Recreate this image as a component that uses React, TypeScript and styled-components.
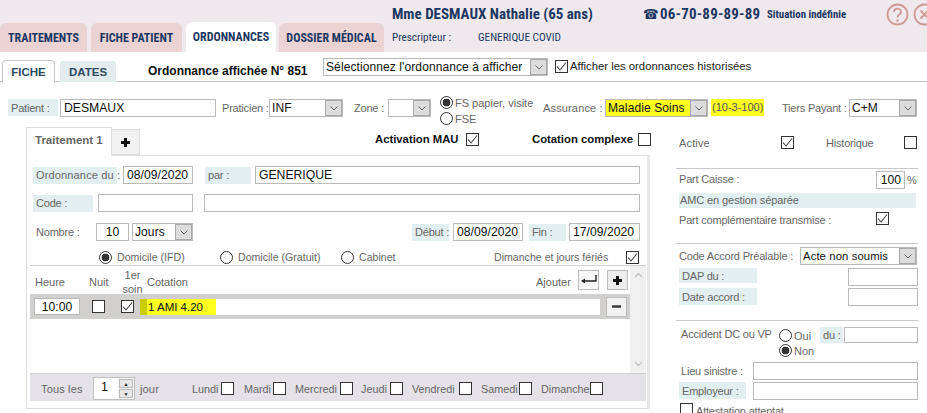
import React from 'react';
import styled, { createGlobalStyle, css } from 'styled-components';

type Box = { $ml?: number; $w?: number; $h?: number; $mt?: number; $pt?: number };

const boxed = css<Box>`
  ${(p) => p.$ml !== undefined && `margin-left: ${p.$ml}px;`}
  ${(p) => p.$mt !== undefined && `margin-top: ${p.$mt}px;`}
  ${(p) => p.$pt !== undefined && `padding-top: ${p.$pt}px;`}
  ${(p) => p.$w !== undefined && `width: ${p.$w}px;`}
  ${(p) => p.$h !== undefined && `height: ${p.$h}px;`}
  flex: none;
`;

const Check = ({ on, ml, mt }: { on?: boolean; ml?: number; mt?: number }) => (
  <CheckBox $ml={ml} $mt={mt}>
    {on && (
      <svg width="11" height="11" viewBox="0 0 11 11">
        <path d="M1 5.5 L4 9 L10 1.5" fill="none" stroke="#444" strokeWidth="1.1" />
      </svg>
    )}
  </CheckBox>
);

const Select = ({ w, ml, value, mark, small }: { w: number; ml?: number; value: string; mark?: boolean; small?: boolean }) => (
  <SelectBox $w={w} $ml={ml} $mark={mark}>
    <SelectValue $small={small}>{value}</SelectValue>
    <SelectArrow>
      <svg width="8" height="5" viewBox="0 0 8 5">
        <path d="M0.5 0.5 L4 4 L7.5 0.5" fill="none" stroke="#666" strokeWidth="1" />
      </svg>
    </SelectArrow>
  </SelectBox>
);

const Days: [string, number, number][] = [
  ['Lundi', 12, 29],
  ['Mardi', 10, 29],
  ['Mercredi', 9, 45],
  ['Jeudi', 8, 29],
  ['Vendredi', 9, 47],
  ['Samedi', 9, 38],
  ['Dimanche', 9, 49],
];

const App = () => {
  return (
    <>
      <GlobalStyle />
      <Page>
        <Header>
          <TabRow>
            <HeadTab $w={87}>TRAITEMENTS</HeadTab>
            <HeadTab $w={91} $ml={4}>FICHE PATIENT</HeadTab>
            <HeadTab $w={90} $ml={4} $active>ORDONNANCES</HeadTab>
            <HeadTab $w={105} $ml={3}>DOSSIER MÉDICAL</HeadTab>
          </TabRow>
          <HeadInfo>
            <HeadLine>
              <PatientName>Mme DESMAUX Nathalie (65 ans)</PatientName>
              <PhoneIcon>☎</PhoneIcon>
              <PhoneNumber>06-70-89-89-89</PhoneNumber>
              <Situation>Situation indéfinie</Situation>
              <RoundIcon $ml={41}>
                <svg width="23" height="23" viewBox="0 0 23 23">
                  <circle cx="11.5" cy="11.5" r="10" fill="none" stroke="#cf9a94" strokeWidth="1.8" />
                  <path d="M8 9 C8 4.5 15 4.5 15 9 C15 11.5 11.5 11.5 11.5 14.5" fill="none" stroke="#cf9a94" strokeWidth="1.9" />
                  <circle cx="11.5" cy="17.5" r="1.2" fill="#cf9a94" />
                </svg>
              </RoundIcon>
              <RoundIcon $ml={4}>
                <svg width="23" height="23" viewBox="0 0 23 23">
                  <circle cx="11.5" cy="11.5" r="10" fill="none" stroke="#cf9a94" strokeWidth="1.8" />
                  <path d="M7.5 7.5 L15.5 15.5 M15.5 7.5 L7.5 15.5" fill="none" stroke="#cf9a94" strokeWidth="1.9" />
                </svg>
              </RoundIcon>
            </HeadLine>
            <SubLine>
              <SubText $w={86}>Prescripteur :</SubText>
              <SubText>GENERIQUE COVID</SubText>
            </SubLine>
          </HeadInfo>
        </Header>

        <SubBar>
          <SubTab $w={53} $ml={2} $active>FICHE</SubTab>
          <SubTab $w={56} $ml={5}>DATES</SubTab>
          <SubTitle>Ordonnance affichée N° 851</SubTitle>
          <Select w={225} value="Sélectionnez l'ordonnance à afficher" />
          <Check on ml={7} mt={2} />
          <BarLabel>Afficher les ordonnances historisées</BarLabel>
        </SubBar>

        <PatientRow>
          <Label $w={50} $ml={8} $tint>Patient :</Label>
          <Input $w={156} $ml={2} defaultValue="DESMAUX" readOnly />
          <Label $w={47} $ml={6}>Praticien :</Label>
          <Select w={74} value="INF" />
          <Label $w={32} $ml={11}>Zone :</Label>
          <Select w={43} ml={2} value="" />
          <RadioStack>
            <RadioLine><Radio $on /><RadioText>FS papier, visite</RadioText></RadioLine>
            <RadioLine><Radio /><RadioText>FSE</RadioText></RadioLine>
          </RadioStack>
          <Label $w={60} $ml={11} $wide>Assurance :</Label>
          <Select w={103} ml={2} value="Maladie Soins" mark />
          <Rate>(10-3-100)</Rate>
          <Label $w={64} $ml={18}>Tiers Payant :</Label>
          <Select w={68} ml={3} value="C+M" />
        </PatientRow>

        <Main>
          <LeftColumn>
            <TabStrip>
              <TreatTab>Traitement 1</TreatTab>
              <PlusTab>
                <PlusGlyph />
              </PlusTab>
              <StripLabel $ml={235} $w={91}>Activation MAU</StripLabel>
              <Check on />
              <StripLabel $ml={53} $w={106}>Cotation complexe</StripLabel>
              <Check />
            </TabStrip>
            <Panel>
              <FormRow $mt={10}>
                <Label $w={84} $ml={3} $tint $wide>Ordonnance du :</Label>
                <Input $w={70} $ml={6} defaultValue="08/09/2020" readOnly />
                <Label $w={46} $ml={12} $tint>par :</Label>
                <Input $w={385} $ml={4} defaultValue="GENERIQUE" readOnly />
              </FormRow>
              <FormRow $mt={10}>
                <Label $w={60} $ml={3} $tint>Code :</Label>
                <Input $w={95} $ml={5} readOnly />
                <Input $w={436} $ml={11} readOnly />
              </FormRow>
              <FormRow $mt={11}>
                <Label $w={60} $ml={6}>Nombre :</Label>
                <Input $w={33} $center defaultValue="10" readOnly />
                <Select w={61} ml={3} value="Jours" />
                <Label $w={37} $ml={219} $tint>Début :</Label>
                <Input $w={70} $ml={4} defaultValue="08/09/2020" readOnly />
                <Label $w={37} $ml={6} $tint>Fin :</Label>
                <Input $w={71} $ml={3} defaultValue="17/09/2020" readOnly />
              </FormRow>
              <PlaceRow>
                <Radio $on $ml={69} />
                <PlaceText $w={108}>Domicile (IFD)</PlaceText>
                <Radio />
                <PlaceText $w={108}>Domicile (Gratuit)</PlaceText>
                <Radio />
                <PlaceText $w={135}>Cabinet</PlaceText>
                <PlaceText $w={137}>Dimanche et jours fériés</PlaceText>
                <Check on />
              </PlaceRow>
              <TableArea>
                <TableMain>
                  <TableHead>
                    <Head $w={54} $ml={5}>Heure</Head>
                    <Head $w={29}>Nuit</Head>
                    <Head $w={29} $center>1er<br />soin</Head>
                    <Head $w={389}>Cotation</Head>
                    <Head $w={42}>Ajouter</Head>
                    <SmallButton>
                      <svg width="16" height="10" viewBox="0 0 16 10">
                        <path d="M15 0 V6 H3" fill="none" stroke="#222" strokeWidth="1.4" />
                        <path d="M0 6 L4 3.5 V8.5 Z" fill="#222" />
                      </svg>
                    </SmallButton>
                    <SmallButton $ml={8} $dark><PlusGlyph /></SmallButton>
                  </TableHead>
                  <TableRow>
                    <Input $w={46} $ml={4} $h={17} $center defaultValue="10:00" readOnly />
                    <Check ml={12} />
                    <Check on ml={16} />
                    <CotationInput>
                      <CotationMark>1 AMI 4.20</CotationMark>
                    </CotationInput>
                    <SmallButton $ml={6} $light>
                      <MinusGlyph />
                    </SmallButton>
                  </TableRow>
                </TableMain>
                <Scrollbar>
                  <svg width="9" height="6" viewBox="0 0 9 6"><path d="M1 5 L4.5 1.5 L8 5" fill="none" stroke="#c5c5c5" strokeWidth="1.4" /></svg>
                  <svg width="9" height="6" viewBox="0 0 9 6"><path d="M1 1 L4.5 4.5 L8 1" fill="none" stroke="#c5c5c5" strokeWidth="1.4" /></svg>
                </Scrollbar>
              </TableArea>
              <RepeatBar>
                <Label $w={52} $ml={11} $wide>Tous les</Label>
                <Spinner>
                  <SpinnerValue>1</SpinnerValue>
                  <SpinnerButtons>
                    <SpinButton>▲</SpinButton>
                    <SpinButton>▼</SpinButton>
                  </SpinnerButtons>
                </Spinner>
                <Label $w={40} $ml={5} $wide>jour</Label>
                {Days.map(([day, gap, width]) => (
                  <DayItem key={day} $ml={gap}>
                    <DayName $w={width}>{day}</DayName>
                    <Check />
                  </DayItem>
                ))}
              </RepeatBar>
            </Panel>
          </LeftColumn>

          <RightColumn>
            <SideRow $h={42} $pt={9} $line>
              <Label $w={102} $ml={3} $h={13} $wide>Active</Label>
              <Check on />
              <Label $w={78} $ml={32} $h={13}>Historique</Label>
              <Check />
            </SideRow>
            <SideRow $h={24} $pt={2}>
              <Label $w={197} $ml={3} $h={16}>Part Caisse :</Label>
              <Input $w={29} $right defaultValue="100" readOnly />
              <Label $w={12} $ml={2}>%</Label>
            </SideRow>
            <Band>AMC en gestion séparée</Band>
            <SideRow $h={36} $pt={4} $line>
              <Label $w={197} $ml={3} $h={15}>Part complémentaire transmise :</Label>
              <Check on />
            </SideRow>
            <SideRow $h={22} $pt={3}>
              <Label $w={121} $ml={3}>Code Accord Préalable :</Label>
              <Select w={117} value="Acte non soumis" small />
            </SideRow>
            <SideRow $h={21} $pt={2}>
              <Label $w={78} $ml={3} $h={15} $tint>DAP du :</Label>
              <Input $w={70} $ml={91} readOnly />
            </SideRow>
            <SideRow $h={34} $pt={1} $line>
              <Label $w={78} $ml={3} $tint>Date accord :</Label>
              <Input $w={70} $ml={91} readOnly />
            </SideRow>
            <AccidentRow>
              <Label $w={98} $ml={5} $h={13}>Accident DC ou VP</Label>
              <RadioStack $tight>
                <RadioLine><Radio /><RadioText>Oui</RadioText></RadioLine>
                <RadioLine><Radio $on /><RadioText>Non</RadioText></RadioLine>
              </RadioStack>
              <Label $w={23} $h={16} $tint>du :</Label>
              <Input $w={74} $ml={1} $h={16} readOnly />
            </AccidentRow>
            <SideRow $h={20} $pt={1}>
              <Label $w={72} $ml={5}>Lieu sinistre :</Label>
              <Input $w={165} readOnly />
            </SideRow>
            <SideRow $h={22} $pt={1}>
              <Label $w={67} $ml={3} $tint>Employeur :</Label>
              <Input $w={165} $ml={7} readOnly />
            </SideRow>
            <SideRow $h={14}>
              <Check ml={4} />
              <Label $ml={3} $h={15}>Attestation attentat</Label>
            </SideRow>
          </RightColumn>
        </Main>
      </Page>
    </>
  );
};

const PlusGlyph = () => (
  <svg width="9" height="9" viewBox="0 0 9 9">
    <path d="M4.5 0 V9 M0 4.5 H9" stroke="#111" strokeWidth="3" />
  </svg>
);

const MinusGlyph = () => (
  <svg width="9" height="3" viewBox="0 0 9 3">
    <path d="M0 1.5 H9" stroke="#333" strokeWidth="2.4" />
  </svg>
);

const GlobalStyle = createGlobalStyle`
  html, body { margin: 0; padding: 0; background: #fff; overflow: hidden; }
  * { box-sizing: border-box; }
`;

const Page = styled.div`
  width: 927px;
  height: 413px;
  overflow: hidden;
  background: #fff;
  font-family: "Liberation Sans", Arial, sans-serif;
  font-size: 11px;
  color: #666;
`;

const narrow = css`
  font-family: "Roboto", sans-serif;
  font-stretch: 75%;
`;

const Header = styled.div`
  display: flex;
  height: 52px;
  background: #efe9ed;
`;

const TabRow = styled.div`
  display: flex;
  flex: none;
  align-items: flex-end;
  width: 392px;
`;

const HeadTab = styled.div<Box & { $active?: boolean }>`
  ${boxed}
  ${narrow}
  display: flex;
  align-items: center;
  justify-content: center;
  height: ${(p) => (p.$active ? 30 : 29)}px;
  border-radius: 6px 6px 0 0;
  background: ${(p) => (p.$active ? '#fff' : '#ebd3d3')};
  color: #1d3763;
  font-size: 12px;
  font-weight: 700;
  white-space: nowrap;
`;

const HeadInfo = styled.div`
  display: flex;
  flex-direction: column;
  flex: 1;
  min-width: 0;
  color: #1d3763;
  ${narrow}
`;

const HeadLine = styled.div`
  display: flex;
  align-items: center;
  height: 28px;
`;

const PatientName = styled.div`
  flex: none;
  width: 251px;
  font-size: 15px;
  font-weight: 700;
  white-space: nowrap;
`;

const PhoneIcon = styled.div`
  flex: none;
  width: 17px;
  font-family: "DejaVu Sans", sans-serif;
  font-size: 14px;
`;

const PhoneNumber = styled.div`
  flex: none;
  width: 107px;
  font-size: 15px;
  font-weight: 700;
  letter-spacing: 0.2px;
  white-space: nowrap;
`;

const Situation = styled.div`
  flex: none;
  width: 78px;
  font-size: 10.8px;
  font-weight: 700;
  white-space: nowrap;
`;

const RoundIcon = styled.div<Box>`
  ${boxed}
  display: flex;
  height: 23px;
`;

const SubLine = styled.div`
  display: flex;
  align-items: center;
  height: 22px;
  padding-bottom: 3px;
`;

const SubText = styled.div<Box>`
  ${boxed}
  font-size: 11.2px;
  white-space: nowrap;
`;

const SubBar = styled.div`
  display: flex;
  align-items: flex-start;
  height: 30px;
  padding-top: 6px;
  border-bottom: 1px solid #c4c4c4;
`;

const SubTab = styled.div<Box & { $active?: boolean }>`
  ${boxed}
  display: flex;
  align-items: center;
  justify-content: center;
  height: ${(p) => (p.$active ? 23 : 21)}px;
  margin-top: ${(p) => (p.$active ? 2 : 3)}px;
  border-radius: 4px 4px 0 0;
  border: ${(p) => (p.$active ? '1px solid #c8c8c8' : '1px solid #e2ebee')};
  border-bottom: ${(p) => (p.$active ? '1px solid #fff' : 'none')};
  background: ${(p) => (p.$active ? '#fff' : '#e2ebee')};
  color: #2e4a63;
  font-size: 11.5px;
  font-weight: 700;
`;

const SubTitle = styled.div`
  flex: none;
  width: 175px;
  margin: 6px 0 0 32px;
  color: #111;
  font-size: 12px;
  font-weight: 700;
  white-space: nowrap;
`;

const BarLabel = styled.div`
  flex: none;
  margin: 2px 0 0 2px;
  color: #222;
  font-size: 11.3px;
  white-space: nowrap;
`;

const PatientRow = styled.div`
  display: flex;
  align-items: flex-start;
  height: 32px;
  margin-top: 13px;
  padding-top: 4px;
`;

const Label = styled.div<Box & { $tint?: boolean; $wide?: boolean }>`
  ${boxed}
  display: flex;
  align-items: center;
  height: ${(p) => (p.$h !== undefined ? p.$h : 17)}px;
  padding-left: ${(p) => (p.$tint ? 3 : 0)}px;
  background: ${(p) => (p.$tint ? '#e3eef0' : 'transparent')};
  color: #666;
  font-size: 11px;
  letter-spacing: ${(p) => (p.$wide ? '0.15px' : '-0.2px')};
  white-space: nowrap;
`;

const Input = styled.input<Box & { $center?: boolean; $right?: boolean }>`
  ${boxed}
  height: ${(p) => (p.$h !== undefined ? p.$h : 18)}px;
  padding: 0 3px;
  border: 1px solid #b9b9b9;
  outline: none;
  background: #fff;
  color: #111;
  font-family: "Liberation Sans", Arial, sans-serif;
  font-size: 12.2px;
  text-align: ${(p) => (p.$center ? 'center' : p.$right ? 'right' : 'left')};
`;

const SelectBox = styled.div<Box & { $mark?: boolean }>`
  ${boxed}
  display: flex;
  height: 18px;
  border: 1px solid #b9b9b9;
  background: ${(p) => (p.$mark ? '#ffff20' : '#fff')};
`;

const SelectValue = styled.div<{ $small?: boolean }>`
  flex: 1;
  overflow: hidden;
  padding-left: 2px;
  color: #111;
  font-size: ${(p) => (p.$small ? 11.3 : 12)}px;
  line-height: 16px;
  letter-spacing: 0.1px;
  white-space: nowrap;
`;

const SelectArrow = styled.div`
  display: flex;
  flex: none;
  align-items: center;
  justify-content: center;
  width: 17px;
  border: 1px solid #a8a8a8;
  background: #dcdcdc;
`;

const Rate = styled.div`
  flex: none;
  width: 53px;
  margin-left: 3px;
  padding: 0 1px;
  background: #ffff20;
  color: #555;
  font-size: 11px;
  line-height: 17px;
  white-space: nowrap;
`;

const CheckBox = styled.div<Box>`
  ${boxed}
  display: flex;
  align-items: center;
  justify-content: center;
  width: 13px;
  height: 13px;
  border: 1px solid #333;
  background: #fff;
`;

const Radio = styled.div<Box & { $on?: boolean }>`
  ${boxed}
  width: 13px;
  height: 13px;
  border: 1px solid #333;
  border-radius: 50%;
  background: ${(p) => (p.$on ? 'radial-gradient(circle, #333 0 3.6px, #fff 4.2px)' : '#fff')};
`;

const RadioStack = styled.div<{ $tight?: boolean }>`
  display: flex;
  flex: none;
  flex-direction: column;
  gap: ${(p) => (p.$tight ? 2 : 3)}px;
  width: ${(p) => (p.$tight ? 41 : 92)}px;
  margin: ${(p) => (p.$tight ? '2px 0 0 0' : '-3px 0 0 9px')};
`;

const RadioLine = styled.div`
  display: flex;
  align-items: center;
  height: 13px;
`;

const RadioText = styled.span`
  margin-left: 2px;
  font-size: 11px;
  white-space: nowrap;
`;

const Main = styled.div`
  display: flex;
  align-items: flex-start;
  padding-left: 26px;
`;

const LeftColumn = styled.div`
  flex: none;
  width: 624px;
`;

const TabStrip = styled.div`
  display: flex;
  align-items: center;
  height: 28px;
`;

const TreatTab = styled.div`
  display: flex;
  align-items: center;
  align-self: stretch;
  flex: none;
  width: 86px;
  margin-bottom: -1px;
  padding: 0 0 3px 8px;
  border: 1px solid #ddd;
  border-bottom: 1px solid #fff;
  background: #fff;
  color: #666;
  font-size: 11.5px;
  font-weight: 700;
`;

const PlusTab = styled.div`
  display: flex;
  align-self: flex-end;
  align-items: center;
  justify-content: center;
  flex: none;
  width: 28px;
  height: 26px;
  border: 1px solid #ddd;
  border-left: none;
  background: #f1f1f1;
`;

const StripLabel = styled.div<Box>`
  ${boxed}
  margin-top: -4px;
  color: #111;
  font-size: 11.3px;
  font-weight: 700;
  white-space: nowrap;
  & + div { margin-top: -4px; }
`;

const Panel = styled.div`
  display: flex;
  flex-direction: column;
  height: 254px;
  padding: 0 1px 6px 3px;
  border: 1px solid #ddd;
  border-right: 3px solid #e8e8e8;
`;

const FormRow = styled.div<Box>`
  ${boxed}
  display: flex;
  align-items: center;
  height: 18px;
`;

const PlaceRow = styled.div`
  display: flex;
  align-items: center;
  height: 14px;
  margin-top: 9px;
`;

const PlaceText = styled.div<Box>`
  ${boxed}
  padding-left: 5px;
  font-size: 10.6px;
  white-space: nowrap;
`;

const TableArea = styled.div`
  display: flex;
  height: 109px;
  margin-top: 1px;
  border-top: 1px solid #d0d0d0;
  border-bottom: 1px solid #d0d0d0;
`;

const TableMain = styled.div`
  display: flex;
  flex-direction: column;
  flex: none;
  width: 600px;
`;

const TableHead = styled.div`
  display: flex;
  align-items: center;
  height: 28px;
`;

const Head = styled.div<Box & { $center?: boolean }>`
  ${boxed}
  margin-top: 4px;
  font-size: 11px;
  line-height: 14px;
  text-align: ${(p) => (p.$center ? 'center' : 'left')};
`;

const SmallButton = styled.div<Box & { $dark?: boolean; $light?: boolean }>`
  ${boxed}
  display: flex;
  align-items: center;
  justify-content: center;
  width: 21px;
  height: 20px;
  border: 1px solid #bbb;
  background: ${(p) => (p.$dark ? '#ececec' : p.$light ? '#f1f1f1' : '#f8f8f8')};
`;

const TableRow = styled.div`
  display: flex;
  align-items: center;
  height: 25px;
  background: #d2cfcf;
`;

const CotationInput = styled.div`
  flex: none;
  width: 460px;
  height: 16px;
  margin-left: 6px;
  background: #fff;
`;

const CotationMark = styled.div`
  width: 76px;
  height: 16px;
  padding-left: 8px;
  background: linear-gradient(90deg, #cccc00 0 7px, #ffff20 7px);
  color: #111;
  font-size: 11.5px;
  line-height: 16px;
  white-space: nowrap;
`;

const Scrollbar = styled.div`
  display: flex;
  flex: 1;
  flex-direction: column;
  align-items: center;
  justify-content: space-between;
  padding: 6px 0;
  background: #f0f0f0;
`;

const RepeatBar = styled.div`
  display: flex;
  align-items: center;
  height: 27px;
  padding-top: 2px;
  background: #e4e2e6;
`;

const Spinner = styled.div`
  display: flex;
  flex: none;
  width: 42px;
  height: 23px;
  border: 1px solid #c0c0c0;
  background: #fff;
`;

const SpinnerValue = styled.div`
  width: 24px;
  padding: 2px 0 0 7px;
  color: #111;
  font-size: 12.5px;
`;

const SpinnerButtons = styled.div`
  display: flex;
  flex: 1;
  flex-direction: column;
  gap: 1px;
  padding: 1px;
  background: #f4f4f4;
`;

const SpinButton = styled.div`
  display: flex;
  flex: 1;
  align-items: center;
  justify-content: center;
  border: 1px solid #bbb;
  background: #e6e6e6;
  color: #111;
  font-size: 5px;
`;

const DayItem = styled.div<Box>`
  ${boxed}
  display: flex;
  align-items: center;
`;

const DayName = styled.span<Box>`
  ${boxed}
  font-size: 10.8px;
  white-space: nowrap;
`;

const RightColumn = styled.div`
  display: flex;
  flex: none;
  flex-direction: column;
  width: 242px;
  margin-left: 26px;
`;

const SideRow = styled.div<Box & { $line?: boolean }>`
  ${boxed}
  display: flex;
  align-items: flex-start;
  ${(p) => p.$line && 'border-bottom: 1px solid #c8c8c8;'}
`;

const Band = styled.div`
  height: 15px;
  margin: 0 2px 0 3px;
  padding-left: 1px;
  background: #e3eef0;
  font-size: 11px;
  line-height: 15px;
  letter-spacing: -0.1px;
`;

const AccidentRow = styled.div`
  display: flex;
  align-items: flex-start;
  height: 40px;
  padding-top: 6px;
`;

export default App;
